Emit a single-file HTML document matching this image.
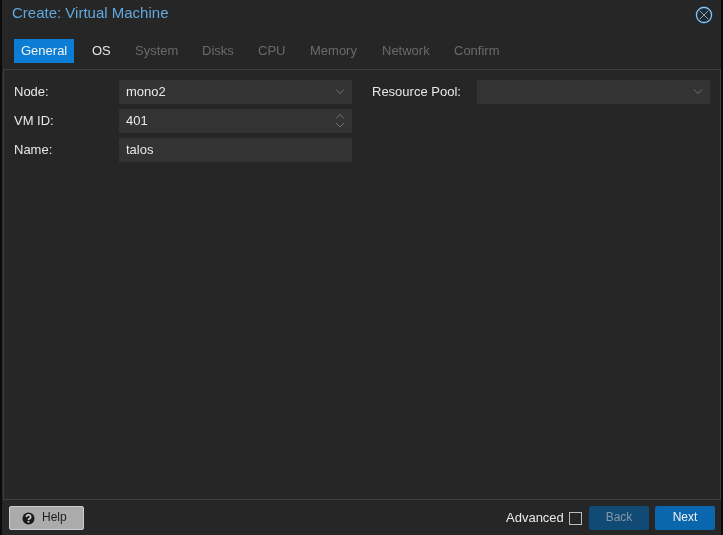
<!DOCTYPE html>
<html><head><meta charset="utf-8">
<style>
*{box-sizing:border-box;margin:0;padding:0}
html,body{width:723px;height:535px;overflow:hidden;background:#0b0b0b;font-family:"Liberation Sans",sans-serif;}
#win{position:absolute;left:2px;top:0;width:719px;height:535px;background:#262626;will-change:transform}
.abs{position:absolute}
#title{left:10px;top:4px;font-size:15px;color:#62a8dc;white-space:nowrap;line-height:18px}
#close{left:693px;top:6px;width:18px;height:18px}
.tab{position:absolute;top:39px;height:24px;font-size:13px;line-height:24px;color:#6a6a6a;padding:0 7px;white-space:nowrap}
.tab.active{background:#0b7dd5;color:#f4f4f4}
.tab.os{color:#e6e6e6}
#body{left:1px;top:69px;width:718px;height:431px;background:#262626;border:1px solid #3e3e3e;}
.lbl{position:absolute;font-size:13px;color:#e8e8e8;line-height:16px;white-space:nowrap}
.fld{position:absolute;height:24px;width:233px;background:#333333;font-size:13px;color:#e8e8e8;line-height:24px;padding-left:7px}
#footer{}
.btn{position:absolute;height:24px;font-size:13px;line-height:24px;text-align:center;border-radius:2px}
</style></head><body>
<div id="win">
  <div class="abs" id="title">Create: Virtual Machine</div>
  <svg class="abs" id="close" viewBox="0 0 18 18"><circle cx="9" cy="9" r="7.6" fill="#212830" stroke="#164066" stroke-width="2.6"/><circle cx="9" cy="9" r="7.6" fill="none" stroke="#a4c6df" stroke-width="1.1"/><path d="M4.9 4.9 L13.1 13.1 M13.1 4.9 L4.9 13.1" stroke="#8fb3d0" stroke-width="0.9"/></svg>

  <div class="tab active" style="left:12px">General</div>
  <div class="tab os" style="left:83px">OS</div>
  <div class="tab" style="left:126px">System</div>
  <div class="tab" style="left:193px">Disks</div>
  <div class="tab" style="left:249px">CPU</div>
  <div class="tab" style="left:301px">Memory</div>
  <div class="tab" style="left:373px">Network</div>
  <div class="tab" style="left:445px">Confirm</div>

  <div class="abs" id="body"></div>

  <div class="lbl" style="left:12px;top:84px">Node:</div>
  <div class="fld" style="left:117px;top:80px">mono2
    <svg class="abs" style="left:216px;top:8px" width="10" height="8" viewBox="0 0 10 8"><path d="M1 1.5 L5 5.5 L9 1.5" fill="none" stroke="#737373" stroke-width="1"/></svg>
  </div>
  <div class="lbl" style="left:12px;top:113px">VM ID:</div>
  <div class="fld" style="left:117px;top:109px">401
    <svg class="abs" style="left:216px;top:3px" width="10" height="18" viewBox="0 0 10 18"><path d="M1 6.5 L5 2.5 L9 6.5 M1 11 L5 15 L9 11" fill="none" stroke="#737373" stroke-width="1"/></svg>
  </div>
  <div class="lbl" style="left:12px;top:142px">Name:</div>
  <div class="fld" style="left:117px;top:138px">talos</div>

  <div class="lbl" style="left:370px;top:84px">Resource Pool:</div>
  <div class="fld" style="left:475px;top:80px">
    <svg class="abs" style="left:216px;top:8px" width="10" height="8" viewBox="0 0 10 8"><path d="M1 1.5 L5 5.5 L9 1.5" fill="none" stroke="#737373" stroke-width="1"/></svg>
  </div>

  <div class="btn" style="left:7px;top:506px;width:75px;background:#ababab;border:1px solid #cdcdcd;color:#1e1e1e">
    <svg class="abs" style="left:12px;top:5px" width="13" height="13" viewBox="0 0 13 13"><circle cx="6.5" cy="6.5" r="6" fill="#1a1a1a"/><path d="M4.5 5.1 A2.05 2.05 0 1 1 7.3 6.8 C6.8 7.1 6.5 7.4 6.5 8.1" fill="none" stroke="#cfcfcf" stroke-width="1.7"/><rect x="5.6" y="8.9" width="1.8" height="1.7" fill="#cfcfcf"/></svg>
    <span style="position:absolute;left:32px;top:-2px;font-size:12px">Help</span>
  </div>
  <div class="lbl" style="left:504px;top:510px">Advanced</div>
  <div class="abs" style="left:567px;top:512px;width:13px;height:13px;border:1px solid #bdbdbd"></div>
  <div class="btn" style="left:587px;top:506px;width:60px;background:#114a75;color:#8797a4;font-size:12px;line-height:22px">Back</div>
  <div class="btn" style="left:653px;top:506px;width:60px;background:#0a67ae;color:#f2f2f2;font-size:12px;line-height:22px">Next</div>
</div>
</body></html>
